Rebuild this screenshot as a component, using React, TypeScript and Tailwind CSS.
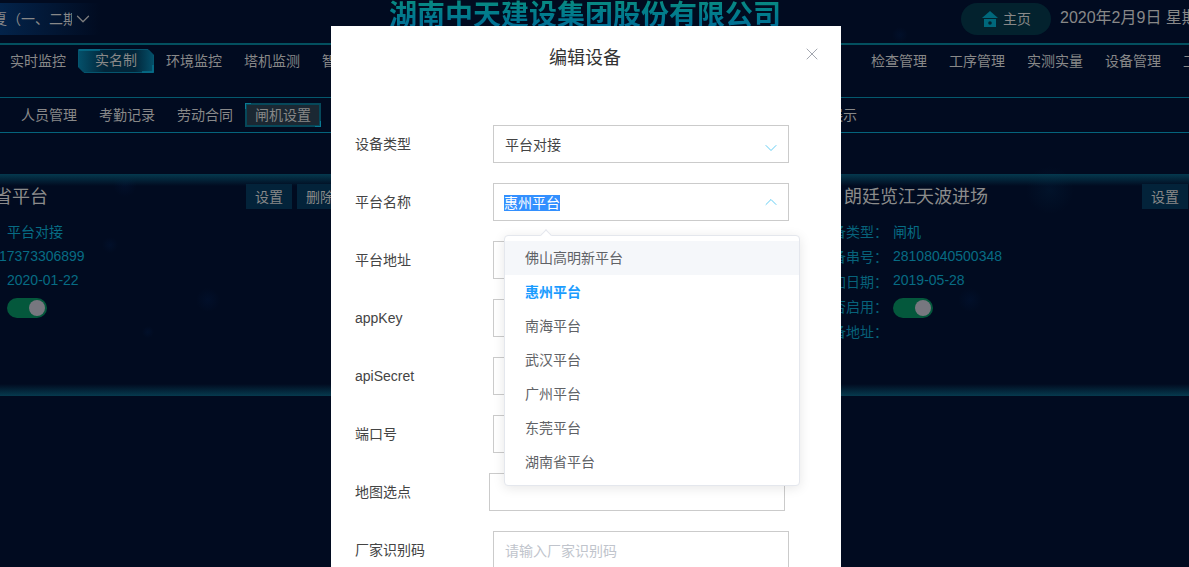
import { ChevronDown, ChevronUp, X } from 'lucide-react'

const navLeft = ['实时监控', '实名制', '环境监控', '塔机监测', '智能水电']
const navRight = ['检查管理', '工序管理', '实测实量', '设备管理', '工程资料']
const subNav = ['人员管理', '考勤记录', '劳动合同', '闸机设置']
const platforms = ['佛山高明新平台', '惠州平台', '南海平台', '武汉平台', '广州平台', '东莞平台', '湖南省平台']

const pageBg =
  'bg-[radial-gradient(circle_at_208px_300px,#03205033_0,transparent_12px),radial-gradient(circle_at_110px_245px,#03204f33_0,transparent_8px),radial-gradient(circle_at_125px_185px,#03204f33_0,transparent_12px),radial-gradient(circle_at_148px_332px,#03204f33_0,transparent_6px),radial-gradient(circle_at_970px_300px,#03204f33_0,transparent_12px),radial-gradient(circle_at_1050px_190px,#04305033_0,transparent_24px),radial-gradient(circle_at_900px_35px,#03204f33_0,transparent_8px)]'

const Toggle = () => (
  <span className="flex h-5 w-10 items-center justify-end rounded-full bg-[#04583c] pr-[2px]">
    <span className="size-4 rounded-full bg-[#77777f]" />
  </span>
)

const CardButton = ({ children }: { children: string }) => (
  <span className="flex h-[25px] w-[46px] items-center justify-center bg-[#03233a] text-sm text-[#888]">
    {children}
  </span>
)

type Row = { label: string; value?: string; valueClass?: string; toggle?: boolean }

const Card = ({ title, rows, className }: { title: string; rows: Row[]; className: string }) => (
  <div className={`shrink-0 ${className}`}>
    <div className="flex h-[25px] items-center justify-between pl-[31px]">
      <span className="mt-px text-lg leading-none text-[#8b8b8b]">{title}</span>
      <div className="flex gap-[5px]">
        <CardButton>设置</CardButton>
        <CardButton>删除</CardButton>
      </div>
    </div>
    <div className="mt-[11px]">
      {rows.map((row) => (
        <div key={row.label} className="flex h-[25px] text-sm leading-[25px] text-[#07627a]">
          <span className="w-20 shrink-0 pl-[5px]">{row.label}</span>
          {row.toggle ? (
            <span className="flex items-center">
              <Toggle />
            </span>
          ) : (
            <span className={`whitespace-nowrap text-[#076c84] ${row.valueClass ?? ''}`}>{row.value}</span>
          )}
        </div>
      ))}
    </div>
  </div>
)

const Field = ({ label, children, inputClass }: { label: string; children: React.ReactNode; inputClass?: string }) => (
  <div className="flex h-[38px] shrink-0 items-center">
    <span className="w-[138px] shrink-0 text-sm text-[#444]">{label}</span>
    <div className={`flex h-[38px] w-[296px] shrink-0 items-center justify-between border border-[#cbcbcb] bg-white pr-[7px] pl-[11px] text-sm ${inputClass ?? ''}`}>
      {children}
    </div>
  </div>
)

export default function App() {
  return (
    <div className={`relative h-[567px] w-full overflow-hidden bg-[#010b20] [font-family:'Liberation_Sans','Noto_Sans_CJK_SC',sans-serif] ${pageBg}`}>
      {/* Header */}
      <header className="flex h-[45px] items-start border-b-2 border-[#03505f]">
        <div className="mt-[3px] flex h-8 w-[100px] shrink-0 items-center bg-gradient-to-r from-[#03234a] to-transparent">
          <div className="w-[72px] overflow-hidden whitespace-nowrap text-sm text-[#888]">
            <span className="-ml-[7px] block w-[100px]">夏（一、二期）</span>
          </div>
          <ChevronDown size={22} strokeWidth={1.4} className="text-[#7d7d7d]" />
        </div>
        <h1 className="ml-[289px] w-[392px] shrink-0 bg-gradient-to-b from-[#0a8a80] to-[#04689a] bg-clip-text text-[28px] leading-[32px] font-bold whitespace-nowrap text-transparent">
          湖南中天建设集团股份有限公司
        </h1>
        <div className="mt-[3px] ml-[180px] flex h-8 w-[90px] shrink-0 items-center gap-[5px] rounded-full bg-[#03222e] pl-[21px] text-sm text-[#888]">
          <svg width="16" height="16" viewBox="0 0 16 16" className="shrink-0">
            <path d="M8 0 16 7H0Z" fill="#00687c" />
            <path fillRule="evenodd" d="M2 8h12v8H2Zm6 2.2a1.8 1.8 0 1 0 0 3.6 1.8 1.8 0 0 0 0-3.6Z" fill="#00687c" />
          </svg>
          主页
        </div>
        <span className="mt-[6px] ml-[9px] shrink-0 text-base leading-6 whitespace-nowrap text-[#888]">2020年2月9日 星期日</span>
      </header>

      {/* Main nav */}
      <nav className="flex h-[53px] items-start gap-[22px] border-b border-[#04596e] pt-[7px] pl-[10px] text-sm leading-[19px] whitespace-nowrap text-[#888]">
        {navLeft.map((item) =>
          item === '实名制' ? (
            <span key={item} className="relative -mx-[10px] flex h-[23px] w-[76px] shrink-0 -translate-y-[3px] items-center justify-center">
              <svg width="76" height="24" viewBox="0 0 76 24" className="absolute inset-0">
                <defs>
                  <linearGradient id="activeTab" x1="0" x2="1" y1="0" y2="0">
                    <stop offset="0" stopColor="#04506a" />
                    <stop offset="0.35" stopColor="#02263a" />
                    <stop offset="0.75" stopColor="#02263a" />
                    <stop offset="1" stopColor="#04506a" />
                  </linearGradient>
                </defs>
                <path d="M.5.5H70L75.5 6V23.5H6L.5 18Z" fill="url(#activeTab)" stroke="#05556e" />
                <path d="M1 1H22M64 23H75V16" fill="none" stroke="#07708c" strokeWidth="1.5" />
              </svg>
              <span className="relative">{item}</span>
            </span>
          ) : (
            <span key={item} className="shrink-0">{item}</span>
          ),
        )}
        <span className="w-[449px] shrink-0" />
        {navRight.map((item) => (
          <span key={item} className="shrink-0">{item}</span>
        ))}
      </nav>

      {/* Sub nav */}
      <nav className="flex h-[35px] items-center gap-[22px] border-b border-[#04647c] pl-[21px] text-sm whitespace-nowrap text-[#888]">
        {subNav.map((item) =>
          item === '闸机设置' ? (
            <span key={item} className="relative -ml-[10px] flex h-6 w-[76px] shrink-0 items-center justify-center border-2 border-[#06485a] bg-[#1b2833]">
              <span className="absolute -top-[2px] -left-[2px] size-[6px] border-t border-l border-[#0a7a94]" />
              <span className="absolute -right-[2px] -bottom-[2px] size-[6px] border-r border-b border-[#0a7a94]" />
              {item}
            </span>
          ) : (
            <span key={item} className="shrink-0">{item}</span>
          ),
        )}
        <span className="ml-[486px] shrink-0">展示</span>
      </nav>

      {/* Device cards */}
      <section className="mt-[41px] flex h-[222px] justify-between bg-[linear-gradient(to_bottom,#05394e_0,transparent_12px,transparent_210px,#063a4e_222px)] pt-[10px]">
        <Card
          title="湖南省平台"
          className="-ml-[73px] w-[416px]"
          rows={[
            { label: '设备类型：', value: '平台对接' },
            { label: '联系电话：', value: '17373306899', valueClass: '-ml-[8px] -mt-px' },
            { label: '添加日期：', value: '2020-01-22', valueClass: '-mt-[2px]' },
            { label: '是否启用：', toggle: true },
          ]}
        />
        <Card
          title="朗廷览江天波进场"
          className="-mr-[50px] w-[426px]"
          rows={[
            { label: '设备类型：', value: '闸机' },
            { label: '设备串号：', value: '28108040500348', valueClass: '-mt-px' },
            { label: '添加日期：', value: '2019-05-28', valueClass: '-mt-[2px]' },
            { label: '是否启用：', toggle: true },
            { label: '设备地址：' },
          ]}
        />
      </section>

      {/* Edit dialog */}
      <div className="absolute top-[26px] left-[331px] h-[600px] w-[510px] bg-white">
        <div className="relative flex h-[99px] justify-center pt-5 pr-[2px]">
          <h2 className="text-lg leading-6 text-[#333]">编辑设备</h2>
          <button className="absolute top-[18px] right-[19px] text-[#a3a7b0]">
            <X size={20} strokeWidth={1.2} />
          </button>
        </div>
        <div className="flex flex-col gap-5 px-6">
          <Field label="设备类型">
            <span className="mt-px text-[#444]">平台对接</span>
            <ChevronDown size={20} strokeWidth={1} className="mt-2 text-[#45c3f0]" />
          </Field>
          <Field label="平台名称">
            <span className="mt-px -ml-px bg-[#3390ff] leading-4 text-white">惠州平台</span>
            <ChevronUp size={20} strokeWidth={1} className="text-[#45c3f0]" />
          </Field>
          <Field label="平台地址">{null}</Field>
          <Field label="appKey">{null}</Field>
          <Field label="apiSecret">{null}</Field>
          <Field label="端口号">{null}</Field>
          <Field label="地图选点" inputClass="-ml-1">{null}</Field>
          <Field label="厂家识别码">
            <span className="mt-px text-[#c0c4cc]">请输入厂家识别码</span>
          </Field>
        </div>

        {/* Select dropdown */}
        <div className="absolute top-[209px] left-[173px] w-[296px] rounded border border-[#e4e7ed] bg-white pt-[5px] pb-[6px] shadow-[0_2px_12px_rgba(0,0,0,0.1)]">
          <span className="absolute -top-[5px] left-[37px] size-2 rotate-45 border-t border-l border-[#e4e7ed] bg-white" />
          {platforms.map((name, i) => (
            <div
              key={name}
              className={`flex h-[34px] items-center px-5 text-sm ${i === 0 ? 'bg-[#f5f7fa]' : ''} ${name === '惠州平台' ? 'font-bold text-[#1a9cff]' : 'text-[#606266]'}`}
            >
              {name}
            </div>
          ))}
        </div>
      </div>
    </div>
  )
}
